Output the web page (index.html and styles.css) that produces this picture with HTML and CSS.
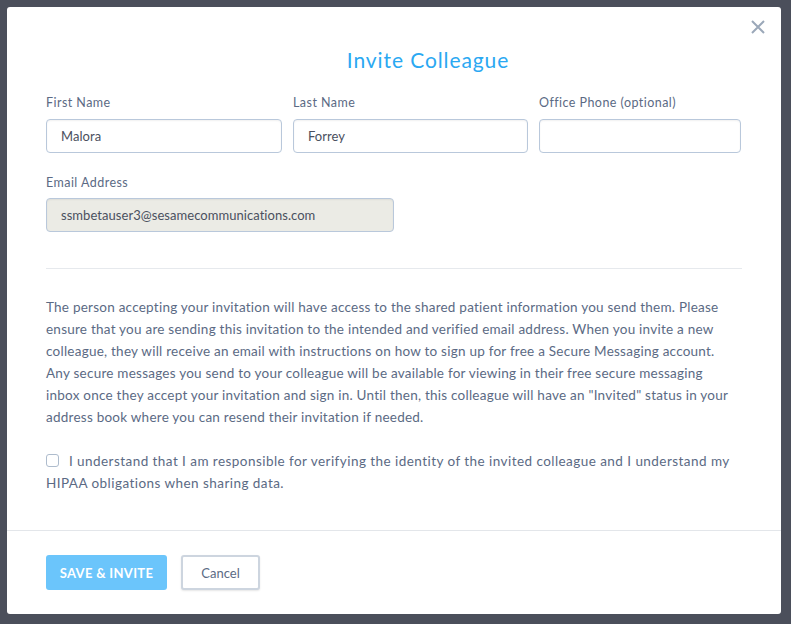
FILE: index.html
```html
<!DOCTYPE html>
<html>
<head>
  <meta charset="UTF-8">
  <title>Invite Colleague</title>
  <link rel="stylesheet" href="styles.css">
</head>
<body>
  <div class="modal">
    <button class="close-btn" aria-label="Close">
      <svg width="14" height="14" viewBox="0 0 14 14">
        <path d="M1 1 L13 13 M13 1 L1 13" stroke="#9ba8b9" stroke-width="2" fill="none"/>
      </svg>
    </button>

    <div class="modal-body">
      <h2 class="modal-title">Invite Colleague</h2>

      <div class="form-row three">
        <div class="field">
          <label>First Name</label>
          <input type="text" class="input" value="Malora">
        </div>
        <div class="field">
          <label>Last Name</label>
          <input type="text" class="input" value="Forrey">
        </div>
        <div class="field">
          <label>Office Phone (optional)</label>
          <input type="text" class="input" value="">
        </div>
      </div>

      <div class="form-row">
        <div class="field email-field">
          <label>Email Address</label>
          <input type="text" class="input" value="ssmbetauser3@sesamecommunications.com" disabled>
        </div>
      </div>

      <hr class="divider">

      <p class="notice">
        The person accepting your invitation will have access to the shared patient information you send them. Please
        ensure that you are sending this invitation to the intended and verified email address. When you invite a new
        colleague, they will receive an email with instructions on how to sign up for free a Secure Messaging account.
        Any secure messages you send to your colleague will be available for viewing in their free secure messaging
        inbox once they accept your invitation and sign in. Until then, this colleague will have an "Invited" status in your
        address book where you can resend their invitation if needed.
      </p>

      <label class="agree">
        <input type="checkbox" class="checkbox">
        I understand that I am responsible for verifying the identity of the invited colleague and I understand my HIPAA obligations when sharing data.
      </label>
    </div>

    <div class="modal-footer">
      <button class="btn btn-primary">SAVE &amp; INVITE</button>
      <button class="btn btn-default">Cancel</button>
    </div>
  </div>
</body>
</html>
```

FILE: styles.css
```css
* {
  margin: 0;
  padding: 0;
  box-sizing: border-box;
}

body {
  background: #4b4f5b;
  padding: 7px 10px 10px 7px;
  font-family: Lato, 'Liberation Sans', sans-serif;
  color: #5b6a84;
  letter-spacing: 0.45px;
}

.modal {
  position: relative;
  width: 774px;
  height: 607px;
  background: #fff;
  border-radius: 3px;
  display: flex;
  flex-direction: column;
}

.close-btn {
  position: absolute;
  top: 13px;
  right: 16px;
  width: 14px;
  height: 14px;
  background: none;
  border: none;
  cursor: pointer;
}

.close-btn svg {
  display: block;
}

.modal-body {
  flex: 1;
  padding: 41px 39px 0 39px;
}

.modal-title {
  text-align: center;
  color: #2aa8f2;
  font-size: 21px;
  font-weight: 400;
  line-height: 24px;
  letter-spacing: 0.9px;
  padding-left: 68px;
  margin-bottom: 23px;
}

.form-row {
  margin-bottom: 22px;
}

.form-row.three {
  display: grid;
  grid-template-columns: 236px 235px 202px;
  gap: 11px;
}

.field label {
  display: block;
  font-size: 12.5px;
  line-height: 15px;
  margin-bottom: 9px;
}

.email-field {
  width: 348px;
}

.email-field label {
  margin-bottom: 8px;
}

.input {
  display: block;
  width: 100%;
  height: 34px;
  padding: 0 14px;
  border: 1px solid #b9c8db;
  border-radius: 4px;
  box-shadow: inset 0 1px 2px rgba(0, 0, 0, 0.06);
  font-family: inherit;
  font-size: 13px;
  letter-spacing: 0.05px;
  color: #4a505e;
  background: #fff;
}

.input:disabled {
  background: #ebebe5;
}

.divider {
  border: none;
  border-top: 1px solid #e6e9ed;
  margin-top: 36px;
  margin-bottom: 27px;
}

.notice {
  max-width: 688px;
  font-size: 13.5px;
  line-height: 22px;
  letter-spacing: 0.24px;
  margin-bottom: 22px;
}

.agree {
  display: block;
  font-size: 13.5px;
  line-height: 22px;
}

.checkbox {
  appearance: none;
  width: 13px;
  height: 13px;
  border: 1px solid #aebccd;
  border-radius: 3px;
  vertical-align: -1px;
  margin-right: 6px;
  background: #fff;
}

.modal-footer {
  border-top: 1px solid #e3e6ea;
  padding: 24px 39px;
  display: flex;
  gap: 14px;
}

.btn {
  height: 35px;
  border-radius: 3px;
  font-family: inherit;
  font-size: 13px;
  cursor: pointer;
}

.btn-primary {
  width: 121px;
  background: #6bc5fb;
  border: none;
  color: #fff;
  font-weight: 700;
  letter-spacing: 0.3px;
}

.btn-default {
  width: 79px;
  background: #fff;
  border: 2px solid #cdd5df;
  color: #5b6a84;
  box-shadow: 0 1px 2px rgba(0, 0, 0, 0.1);
}
```
